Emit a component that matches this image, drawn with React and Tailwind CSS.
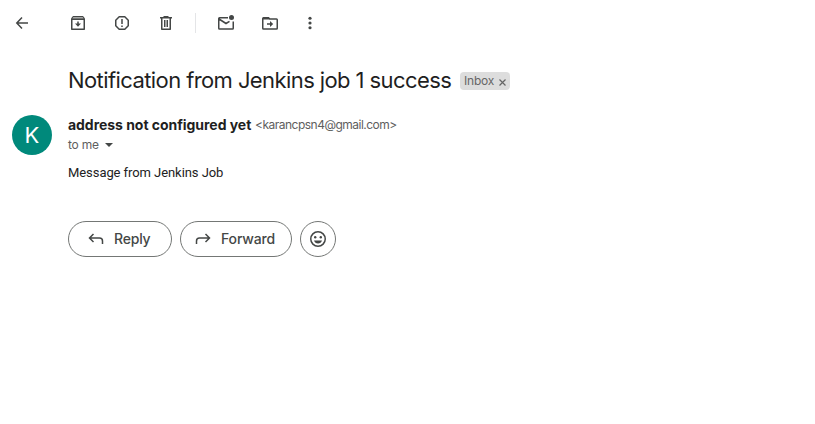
import React from "react";

function Icon({ children, className = "" }) {
  return (
    <svg
      width="20"
      height="20"
      viewBox="0 0 20 20"
      fill="none"
      stroke="currentColor"
      strokeWidth="1.5"
      className={"shrink-0 " + className}
    >
      {children}
    </svg>
  );
}

function Toolbar() {
  return (
    <div className="flex h-[46px] items-center pl-3 text-[#444746]">
      <Icon>
        <path d="M16 10H5M10 4.6L4.8 10L10 15.4" />
      </Icon>
      <Icon className="ml-9">
        <path d="M3.75 6.5V16.25H16.25V6.5" strokeLinejoin="round" />
        <path d="M5 3h10l2 2.5V7H3V5.500z" fill="currentColor" stroke="none" />
        <path d="M5.300 4h9.400l.9 1.500H4.400z" fill="#a5a7a6" stroke="none" />
        <path d="M9.250 8.500h1.500v2h2.250L10 13.700L7 10.500h2.250z" fill="currentColor" stroke="none" />
      </Icon>
      <Icon className="ml-6">
        <path d="M7.200 3.750h5.600l3.450 3.450v5.600l-3.450 3.450H7.200L3.750 12.800V7.200z" strokeLinejoin="round" />
        <path d="M10 6v5M10 12.500v1.500" />
      </Icon>
      <Icon className="ml-6">
        <path d="M4 4.750H16M7.500 3.700h5M5.750 5V16.250H14.250V5" strokeLinejoin="round" />
        <path d="M8.750 7v7M11.250 7v7" />
      </Icon>
      <div className="ml-[19px] h-5 w-px bg-[#e4e5e7]" />
      <Icon className="ml-5">
        <path d="M12 4.750H3.500a.75.75 0 0 0-.75.75v9.750a.75.75 0 0 0 .75.75h13a.75.75 0 0 0 .75-.75V8.500M3 6l7 4.500 3.500-2.200" />
        <circle cx="15.500" cy="4.500" r="2.500" fill="currentColor" stroke="none" />
      </Icon>
      <Icon className="ml-6">
        <path d="M2.750 5.500V15.250a.75.75 0 0 0 .75.75h13a.75.75 0 0 0 .75-.75V6.750a.75.75 0 0 0-.75-.75H10L8.500 4.750h-5a.75.75 0 0 0-.75.75z" />
        <path d="M3 4.500h5.500l1.500 2H3z" fill="currentColor" stroke="none" />
        <path d="M7 10.250h3v-2.250l3.200 3-3.200 3v-2.250H7z" fill="currentColor" stroke="none" />
      </Icon>
      <Icon className="ml-5">
        <g fill="currentColor" stroke="none">
          <circle cx="10" cy="5.250" r="1.600" />
          <circle cx="10" cy="10" r="1.600" />
          <circle cx="10" cy="14.750" r="1.600" />
        </g>
      </Icon>
    </div>
  );
}

function Subject() {
  return (
    <div className="mt-[19px] flex h-8 items-center pl-[68px]">
      <h1 className="w-[392px] whitespace-nowrap pb-0.5 text-[22px] leading-[30px] tracking-[-0.59px] text-[#1f1f1f]">
        Notification from Jenkins job 1 success
      </h1>
      <div className="flex h-[18px] w-[50px] items-center rounded bg-[#ddd] pl-1 text-[12px] text-[#666]">
        <span className="tracking-[-0.2px]">Inbox</span>
        <svg width="7" height="7" viewBox="0 0 7 7" stroke="#666" strokeWidth="1.2" className="ml-auto mr-1 mt-0.5">
          <path d="M.5.5l6 6M6.500.5l-6 6" />
        </svg>
      </div>
    </div>
  );
}

function Message() {
  return (
    <div className="mt-[18px] flex pl-3">
      <div className="flex size-10 shrink-0 items-center justify-center rounded-full bg-[#00897b] text-[22px] text-white">
        K
      </div>
      <div className="ml-4">
        <div className="flex h-5 items-center whitespace-nowrap">
          <span className="w-[187px] pb-px text-[14px] font-bold tracking-[-0.04px] text-[#1f1f1f]">
            address not configured yet
          </span>
          <span className="text-[12px] tracking-[-0.51px] text-[#5e5e5e]">&lt;karancpsn4@gmail.com&gt;</span>
        </div>
        <div className="flex h-5 items-center text-[12px] text-[#5e5e5e]">
          <span className="w-[37px] whitespace-nowrap tracking-[-0.2px]">to me</span>
          <svg width="8" height="4" viewBox="0 0 8 4" fill="#444746">
            <path d="M0 0h8L4 4z" />
          </svg>
        </div>
        <p className="mt-2 font-['Roboto',sans-serif] text-[13px] leading-5 tracking-[-0.07px] text-[#222]">
          Message from Jenkins Job
        </p>
      </div>
    </div>
  );
}

function Actions() {
  const button = "flex h-9 items-center rounded-full border border-[#747775]";
  return (
    <div className="mt-[38px] flex gap-2 pl-[68px] text-[14px] font-medium text-[#444746]">
      <button className={button + " w-[104px] pl-[17px]"}>
        <Icon>
          <path d="M16.500 15v-3a3 3 0 0 0-3-3H4M7.500 5L3.500 9l4 4" />
        </Icon>
        <span className="ml-2 pb-0.5 tracking-[-0.2px]">Reply</span>
      </button>
      <button className={button + " w-[112px] pl-3"}>
        <Icon>
          <path d="M3.500 15v-3a3 3 0 0 1 3-3H16M12.500 5l4 4-4 4" />
        </Icon>
        <span className="ml-2 pb-0.5 tracking-[-0.15px]">Forward</span>
      </button>
      <button className={button + " w-9 justify-center"}>
        <Icon>
          <circle cx="10" cy="10" r="7.250" />
          <g fill="currentColor" stroke="none">
            <circle cx="7.200" cy="8.200" r="1.200" />
            <circle cx="12.800" cy="8.200" r="1.200" />
            <path d="M6 11.500h8c-.6 1.800-2.100 3-4 3s-3.400-1.200-4-3z" />
          </g>
        </Icon>
      </button>
    </div>
  );
}

export default function App() {
  return (
    <main className="h-screen overflow-hidden bg-white font-['Inter','Liberation_Sans',sans-serif]">
      <Toolbar />
      <Subject />
      <Message />
      <Actions />
    </main>
  );
}
